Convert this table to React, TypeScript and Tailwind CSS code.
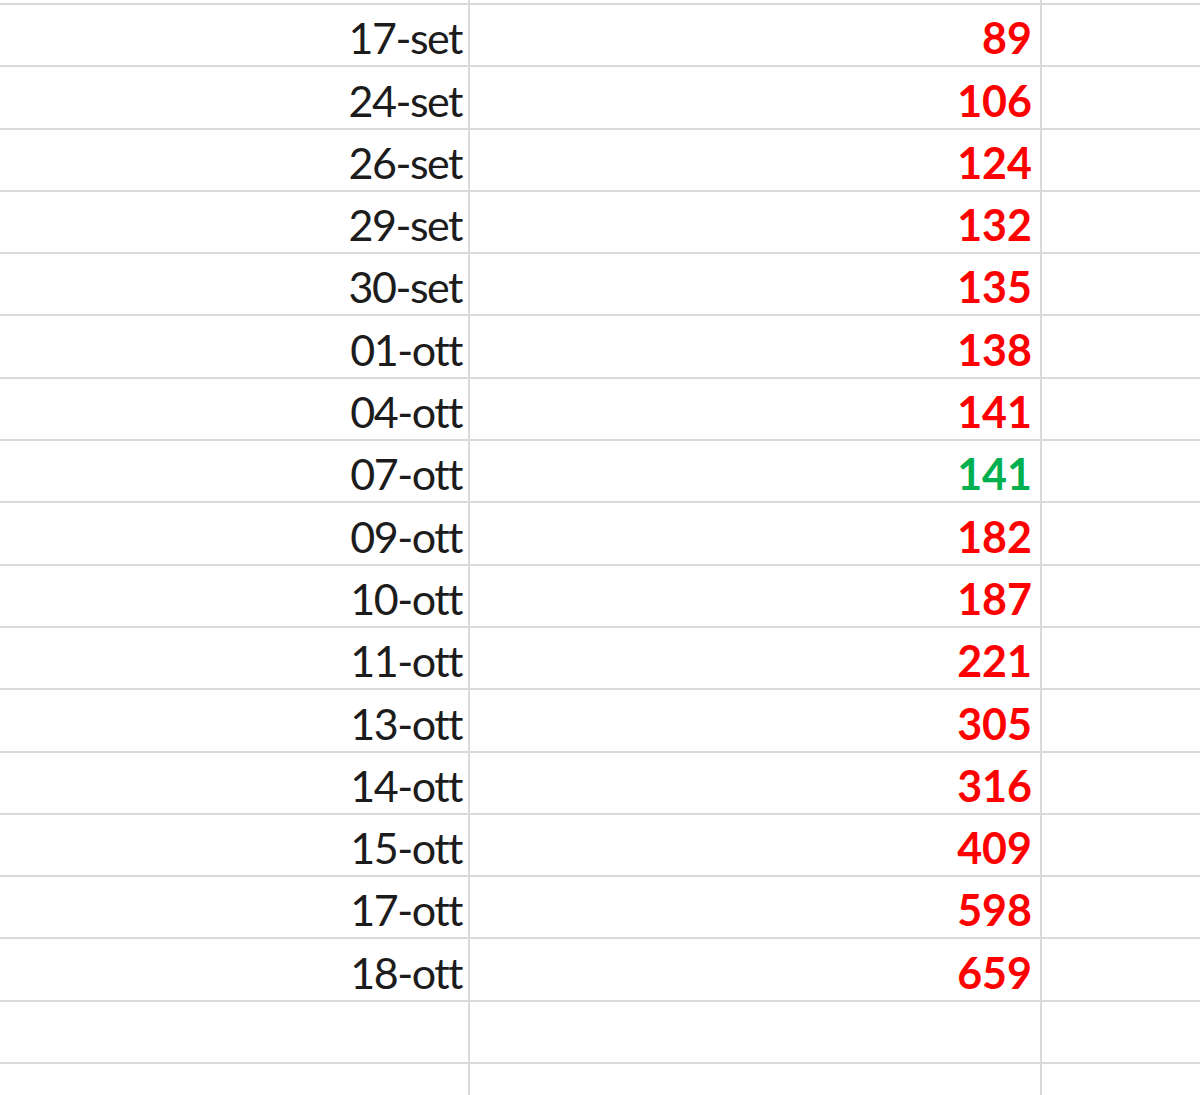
const rows: { date: string; value: number; green?: boolean }[] = [
  { date: '17-set', value: 89 },
  { date: '24-set', value: 106 },
  { date: '26-set', value: 124 },
  { date: '29-set', value: 132 },
  { date: '30-set', value: 135 },
  { date: '01-ott', value: 138 },
  { date: '04-ott', value: 141 },
  { date: '07-ott', value: 141, green: true },
  { date: '09-ott', value: 182 },
  { date: '10-ott', value: 187 },
  { date: '11-ott', value: 221 },
  { date: '13-ott', value: 305 },
  { date: '14-ott', value: 316 },
  { date: '15-ott', value: 409 },
  { date: '17-ott', value: 598 },
  { date: '18-ott', value: 659 },
];

function Row({ date, value, green, h = 'h-[62.3px]' }: { date?: string; value?: number; green?: boolean; h?: string }) {
  return (
    <div className={`flex ${h} border-b-2 border-[#dadada]`}>
      <div className="flex w-[470px] shrink-0 items-end justify-end border-r-2 border-[#dadada] pr-[6px] pb-[6px] text-[43px] leading-none tracking-[-1.5px] text-[#1c1c1c]">
        {date}
      </div>
      <div
        className={`flex w-[572px] shrink-0 items-end justify-end border-r-2 border-[#dadada] pr-[8px] pb-[6px] text-[43px] font-bold leading-none ${
          green ? 'text-[#00b050]' : 'text-[#ff0000]'
        }`}
      >
        {value}
      </div>
      <div className="flex-1" />
    </div>
  );
}

export default function App() {
  return (
    <div className="h-[1095px] w-[1200px] overflow-hidden bg-white font-['Lato',sans-serif]">
      <Row h="h-[5px]" />
      {rows.map((r) => (
        <Row key={r.date} {...r} />
      ))}
      <Row />
      <Row />
    </div>
  );
}
